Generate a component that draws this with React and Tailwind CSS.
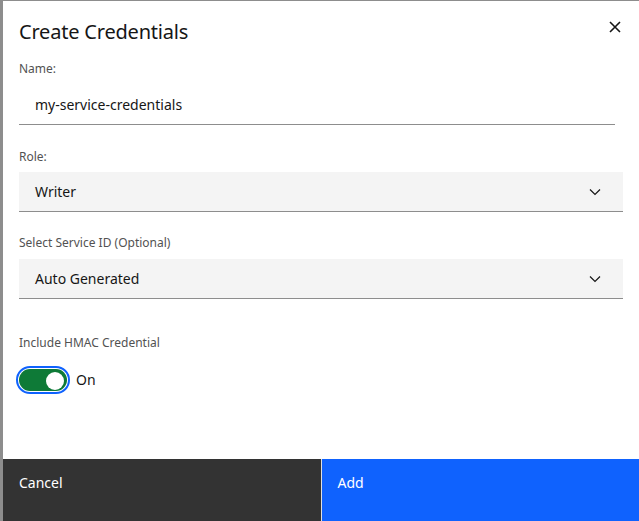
import React, { useState } from 'react';

const font = { fontFamily: '"Noto Sans", "Open Sans", Arial, sans-serif' };

const Chevron = () => (
    <svg width="12" height="8" viewBox="0 0 12 8" fill="none">
        <path d="M1 1.5 L6 6.5 L11 1.5" stroke="#161616" strokeWidth="1.2" />
    </svg>
);

const CloseIcon = () => (
    <svg width="12" height="12" viewBox="0 0 12 12" fill="none">
        <path d="M1 1 L11 11 M11 1 L1 11" stroke="#161616" strokeWidth="1.6" />
    </svg>
);

const Select = ({ value }) => (
    <div className="flex items-center justify-between h-10 bg-[#f4f4f4] border-b border-[#8d8d8d] pl-4 pr-[22px] text-sm text-[#161616]">
        <span>{value}</span>
        <Chevron />
    </div>
);

const Label = ({ children, className = '' }) => (
    <div className={`text-xs leading-4 text-[#525252] ${className}`}>{children}</div>
);

const App = () => {
    const [on, setOn] = useState(true);
    return (
        <div className="w-[639px] h-[521px] bg-[#8d8d8d] pt-px pl-[3px] overflow-hidden" style={font}>
            <div className="flex flex-col h-[520px] bg-white">
                <div className="flex-1 pt-[17px] pl-4 pr-4">
                    <div className="flex items-start justify-between">
                        <h2 className="text-xl leading-7 text-[#161616] tracking-[-0.2px]">Create Credentials</h2>
                        <button className="-mt-px -mr-[2px] p-1"><CloseIcon /></button>
                    </div>

                    <Label className="mt-[15px]">Name:</Label>
                    <div className="mt-2 mr-2 h-10 flex items-center border-b border-[#8d8d8d] pl-4 text-sm text-[#161616]">
                        my-service-credentials
                    </div>

                    <Label className="mt-6">Role:</Label>
                    <div className="mt-[7px]"><Select value="Writer" /></div>

                    <Label className="mt-[23px]">Select Service ID (Optional)</Label>
                    <div className="mt-[8px]"><Select value="Auto Generated" /></div>

                    <Label className="mt-[36px]">Include HMAC Credential</Label>
                    <div className="mt-[15px] flex items-center gap-[6px]">
                        <button
                            onClick={() => setOn(!on)}
                            className="w-[54px] h-[28px] rounded-full border-2 border-[#0f62fe] p-px -ml-[3px]"
                        >
                            <div className={`relative h-full w-full rounded-full ${on ? 'bg-[#0e7a37]' : 'bg-[#8d8d8d]'}`}>
                                <div className={`absolute top-[3px] w-[18px] h-[18px] rounded-full bg-white ${on ? 'right-[3px]' : 'left-[3px]'}`} />
                            </div>
                        </button>
                        <span className="text-sm text-[#161616]">{on ? 'On' : 'Off'}</span>
                    </div>
                </div>

                <div className="flex h-[62px] gap-px bg-[#e0e0e0]">
                    <button className="flex-1 bg-[#333333] text-left text-sm text-white pl-4 pt-[14px] self-stretch flex items-start">
                        Cancel
                    </button>
                    <button className="flex-1 bg-[#0f62fe] text-left text-sm text-white pl-4 pt-[14px] self-stretch flex items-start">
                        Add
                    </button>
                </div>
            </div>
        </div>
    );
};

export default App;
